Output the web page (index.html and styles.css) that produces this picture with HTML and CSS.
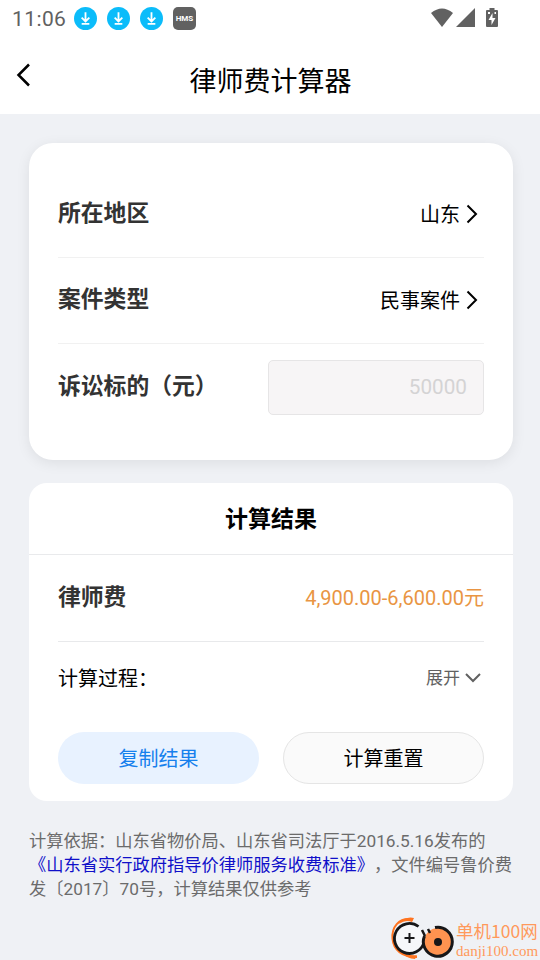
FILE: index.html
```html
<!DOCTYPE html>
<html lang="zh-CN">
<head>
<meta charset="utf-8">
<title>律师费计算器</title>
<link rel="stylesheet" href="styles.css">
</head>
<body>
<svg class="defs" aria-hidden="true">
  <symbol id="download" viewBox="0 0 24 24"><circle cx="12" cy="12" r="12" fill="#0bbcfa"/><path d="M12 5.500v9M8 11l4 4 4-4M8 17.600h8" fill="none" stroke="#fff" stroke-width="1.900"/></symbol>
  <symbol id="chevron" viewBox="0 0 12 20"><path d="M1.500 1.500 10 10l-8.500 8.500" fill="none" stroke="currentColor" stroke-width="2"/></symbol>
</svg>
<header class="header">
  <div class="status">
    <span class="time">11:06</span>
    <svg class="notice"><use href="#download"/></svg>
    <svg class="notice"><use href="#download"/></svg>
    <svg class="notice"><use href="#download"/></svg>
    <span class="hms">HMS</span>
    <svg class="signals" width="68" height="20" viewBox="0 0 68 20" fill="#616161">
      <path d="M0 5Q11-4 22 5L11 19Z"/>
      <path d="M44 0v19H25Z"/>
      <path d="M58.500 0h5v2H66q1 0 1 1v15q0 1-1 1H56q-1 0-1-1V3q0-1 1-1h2.500Z"/>
      <path d="M57 4h2v2h-2ZM63.500 4h1.500v2h-1.500ZM61.500 5v5h3L60.500 17v-5h-3Z" fill="#fff"/>
    </svg>
  </div>
  <div class="nav">
    <svg class="back" width="15" height="24" viewBox="0 0 15 24"><path d="M13 1.500 2.500 12 13 22.500" fill="none" stroke="#000" stroke-width="2.500"/></svg>
    <h1 class="title">律师费计算器</h1>
  </div>
</header>
<main class="content">
  <section class="card form">
    <div class="row"><span class="label">所在地区</span><span class="value">山东<svg class="arrow"><use href="#chevron"/></svg></span></div>
    <div class="row"><span class="label">案件类型</span><span class="value">民事案件<svg class="arrow"><use href="#chevron"/></svg></span></div>
    <div class="row amount"><label class="label" for="amount">诉讼标的（元）</label><input class="input" id="amount" placeholder="50000"></div>
  </section>
  <section class="card result">
    <h2 class="result-title">计算结果</h2>
    <div class="result-body">
      <div class="fee"><span class="label">律师费</span><span class="price">4,900.00-6,600.00元</span></div>
      <div class="process"><span class="process-label">计算过程：</span><span class="expand">展开<svg width="16" height="10" viewBox="0 0 16 10"><path d="m1 1 7 7 7-7" fill="none" stroke="currentColor" stroke-width="2"/></svg></span></div>
      <div class="actions"><button class="button copy">复制结果</button><button class="button reset">计算重置</button></div>
    </div>
  </section>
  <p class="basis">计算依据：山东省物价局、山东省司法厅于2016.5.16发布的<br><a class="link">《山东省实行政府指导价律师服务收费标准》</a>，文件编号鲁价费<br>发〔2017〕70号，计算结果仅供参考</p>
</main>
<div class="watermark">
  <svg width="64" height="44" viewBox="0 0 64 44" fill="none">
    <path d="M23 3.500C8 1 1.500 12 2.500 23S12 41 27 41" stroke="#ff7420" stroke-width="2"/>
    <path d="M9 8Q15 0 24 2l-2 4Q15 3.500 9 8ZM11 36q7 4 16 3l-2 4q-8 0-14-7Z" fill="#ff7420"/>
    <circle cx="19.500" cy="22.500" r="14" fill="#f6f7fa"/>
    <path d="M28.500 10.500A15 15 0 1 0 34 26" stroke="#171719" stroke-width="2.800"/>
    <circle cx="48" cy="26" r="14" fill="#ff9350"/>
    <path d="M45 11.500A14.500 14.500 0 1 1 34.500 20" stroke="#171719" stroke-width="3"/>
    <path d="m32 14 3 6M38 13l2 4" stroke="#171719" stroke-width="2.500"/>
    <circle cx="48" cy="26" r="4" fill="#171719"/>
    <path d="M19.500 17v10M14.500 22h10" stroke="#171719" stroke-width="2"/>
  </svg>
  <div class="brand"><span class="brand-name">单机100网</span><span class="brand-url">danji100.com</span></div>
</div>
</body>
</html>
```
FILE: styles.css
```css
* { box-sizing: border-box; }
body {
  margin: 0;
  height: 960px;
  overflow: hidden;
  background: #eff1f5;
  color: #000;
  font: 20px/30px Roboto, "Noto Sans CJK SC", sans-serif;
  text-spacing-trim: space-all;
}
.defs { display: none; }
.header { height: 114px; background: #fff; }
.status { display: flex; align-items: center; height: 37px; padding-left: 12px; }
.time { width: 62px; color: #616161; font-size: 21px; letter-spacing: .4px; }
.notice { width: 23px; height: 23px; margin-right: 10px; }
.hms {
  width: 23px; height: 23px; border-radius: 5px; background: #616161; color: #fff;
  font: bold 8px/23px Roboto, sans-serif; text-align: center;
}
.signals { margin: -2px 41px 0 auto; }
.nav { display: grid; grid-template-columns: 32px 1fr 32px; padding: 0 0 0 1px; height: 77px; }
.back { margin: 26px 0 0 15px; }
.title { margin: 25px 0 0; font-size: 27px; line-height: 40px; font-weight: 400; text-align: center; }
.content { padding: 29px 27px 0 29px; }
.card { background: #fff; }
.form { height: 317px; padding: 29px; border-radius: 24px; box-shadow: 0 3px 14px rgba(0,0,0,.08); }
.row { display: flex; justify-content: space-between; align-items: center; height: 86px; border-bottom: 1px solid #f1f1f1; }
.amount { border: 0; }
.label { color: #333; font-size: 22.800px; font-weight: 700; line-height: 34px; margin-top: -1px; }
.value { display: flex; align-items: center; }
.arrow { width: 12px; height: 20px; margin: -2px 6px 0 6px; }
.input {
  width: 216px; height: 55px; border: 1px solid #e6e5e6; border-radius: 5px;
  background: #f7f5f6; padding: 0 16px; text-align: right; font: 20.700px Roboto, sans-serif;
}
.input::placeholder { color: #d4d3d4; }
.result { height: 318px; margin-top: 23px; border-radius: 18px; }
.result-title { margin: 0; padding-top: 1px; height: 72px; border-bottom: 1px solid #e9eaec; text-align: center; font-size: 23px; line-height: 71px; font-weight: 700; }
.result-body { padding: 0 29px; }
.fee { display: flex; justify-content: space-between; align-items: center; height: 87px; border-bottom: 1px solid #e8e9eb; }
.fee .label { margin-top: 0; }
.price { color: #e99543; }
.process { display: flex; justify-content: space-between; align-items: center; height: 72px; }
.process-label { padding-top: 2px; }
.expand { display: flex; align-items: center; gap: 5px; padding-right: 3px; color: #616161; font-size: 17px; }
.actions { display: grid; grid-template-columns: 1fr 1fr; gap: 24px; margin-top: 18px; }
.button { height: 52px; border: 0; border-radius: 26px; padding: 2px 0 0; font: inherit; color: #000; }
.copy { background: #e8f2ff; color: #1680ed; }
.reset { background: #fafafa; border: 1px solid #e5e5e5; }
.basis { margin: 28px 0 0; color: #6b6b6b; font-size: 17.250px; line-height: 24px; white-space: nowrap; }
.link { color: #1010c9; }
.watermark { position: absolute; left: 390px; top: 916px; display: flex; color: #ff995b; }
.brand { display: flex; flex-direction: column; padding: 3px 0 0 2px; white-space: nowrap; }
.brand-name { font: 17.500px/24px "Noto Sans CJK SC", sans-serif; }
.brand-url { font: 15px/16px "Liberation Serif", serif; }
```
